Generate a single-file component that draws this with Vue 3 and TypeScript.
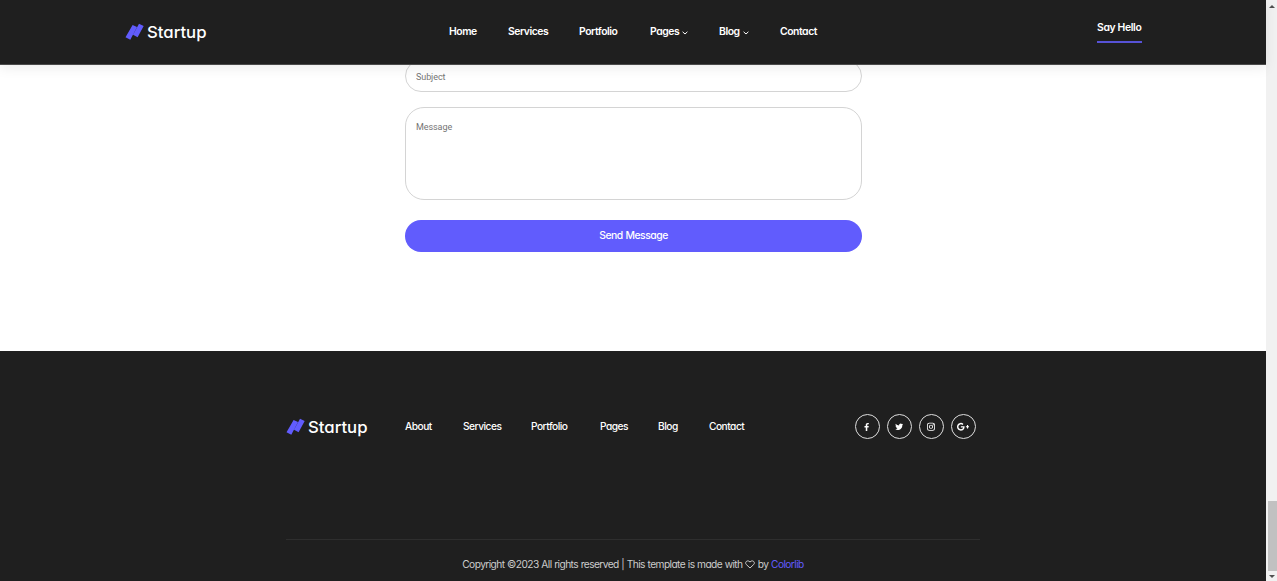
<script setup lang="ts">
interface NavItem {
  label: string
  width: number
  menu?: boolean
}

const mainNav: NavItem[] = [
  { label: 'Home', width: 59 },
  { label: 'Services', width: 71 },
  { label: 'Portfolio', width: 71 },
  { label: 'Pages', width: 69, menu: true },
  { label: 'Blog', width: 61, menu: true },
  { label: 'Contact', width: 37 },
]

const footerNav: NavItem[] = [
  { label: 'About', width: 58 },
  { label: 'Services', width: 68 },
  { label: 'Portfolio', width: 69 },
  { label: 'Pages', width: 58 },
  { label: 'Blog', width: 51 },
  { label: 'Contact', width: 35 },
]

const socials = [
  { name: 'Facebook', box: '0 0 1024 1792', w: 5.14, d: 'M959 140v264h-157q-86 0-116 36t-30 108v189h293l-39 296h-254v759h-306v-759h-255v-296h255v-218q0-186 104-288.500t277-102.500q147 0 228 12z' },
  { name: 'Twitter', box: '0 0 1664 1792', w: 8.36, d: 'M1620 408q-67 98-162 167 1 14 1 42 0 130-38 259.500t-115.500 248.500-184.500 210.500-258 146-323 54.500q-271 0-496-145 35 4 78 4 225 0 401-138-105-2-188-64.500t-114-159.500q33 5 61 5 43 0 85-11-112-23-185.500-111.500t-73.500-205.500v-4q68 38 146 41-66-44-105-115t-39-154q0-88 44-163 121 149 294.500 238.500t371.500 99.500q-8-38-8-74 0-134 94.500-228.500t228.500-94.500q140 0 236 102 109-21 205-78-37 115-142 178 93-10 186-50z' },
  { name: 'Instagram', box: '0 0 8 9', w: 8, d: 'M2.300.5h3.400A2.300 2.300 0 0 1 8 2.800v3.400A2.300 2.300 0 0 1 5.700 8.500H2.300A2.300 2.300 0 0 1 0 6.200V2.800A2.300 2.300 0 0 1 2.300.5zM2.400 1.300A1.600 1.600 0 0 0 .8 2.900v3.200a1.600 1.600 0 0 0 1.600 1.600h3.200a1.600 1.600 0 0 0 1.600-1.600V2.900a1.600 1.600 0 0 0-1.600-1.600zM4 2.400a2.100 2.100 0 1 1 0 4.200a2.100 2.100 0 0 1 0-4.200zM4 3.300a1.200 1.200 0 1 0 0 2.400a1.200 1.200 0 0 0 0-2.400zM5.800 2h.9v.9h-.9z' },
  { name: 'Google Plus', box: '0 0 2304 1792', w: 12.2, d: 'M1437 913q0 208-87 370.500t-248 254-369 91.500q-149 0-285-58t-234-156-156-234-58-285 58-285 156-234 234-156 285-58q286 0 491 192l-199 191q-117-113-292-113-123 0-227.500 62t-165.500 168.500-61 232.500 61 232.500 165.500 168.500 227.500 62q83 0 152.500-23t114.500-57.500 78.500-78.500 49-83 21.500-74h-416v-252h692q12 63 12 122zm867-122v210h-209v209h-210v-209h-209v-210h209v-209h210v209h209z' },
]
</script>

<template>
  <div class="page">
    <div class="view">
      <header class="header">
        <svg class="logo" viewBox="0 0 82 22" role="img" aria-label="Startup">
          <path class="mark" d="M.5 15.300 5.300 17.800 12 5 7.600 3zM8 12.800 12.600 15.200 18.700 4 14 1.800z" />
          <text x="22" y="15.500" textLength="59.500" lengthAdjust="spacingAndGlyphs">Startup</text>
        </svg>
        <nav class="main-nav">
          <a v-for="item in mainNav" :key="item.label" :style="{ width: item.width + 'px' }">
            {{ item.label }}<svg v-if="item.menu" class="chevron" viewBox="0 0 6 4"><path d="M.6.8 3 3 5.400.8" /></svg>
          </a>
        </nav>
        <a class="hello">Say Hello</a>
      </header>

      <main class="form">
        <input class="field subject" type="text" placeholder="Subject" />
        <textarea class="field message" placeholder="Message"></textarea>
        <button class="send" type="button">Send Message</button>
      </main>

      <footer class="footer">
        <div class="footer-top">
          <svg class="logo" viewBox="0 0 82 22" role="img" aria-label="Startup">
            <path class="mark" d="M.5 15.300 5.300 17.800 12 5 7.600 3zM8 12.800 12.600 15.200 18.700 4 14 1.800z" />
            <text x="22" y="15.500" textLength="59.500" lengthAdjust="spacingAndGlyphs">Startup</text>
          </svg>
          <nav class="footer-nav">
            <a v-for="item in footerNav" :key="item.label" :style="{ width: item.width + 'px' }">{{ item.label }}</a>
          </nav>
          <div class="socials">
            <a v-for="s in socials" :key="s.name" :aria-label="s.name">
              <svg :viewBox="s.box" :width="s.w" height="9.500"><path :d="s.d" fill-rule="evenodd" /></svg>
            </a>
          </div>
        </div>
        <p class="copyright">
          Copyright ©2023 All rights reserved | This template is made with
          <svg class="heart" viewBox="0 0 10 9"><path d="M5 8 1.300 4.500C-.8 2.200 2.600-.8 5 2 7.400-.8 10.800 2.200 8.700 4.500z" /></svg>
          by <a>Colorlib</a>
        </p>
      </footer>
    </div>
    <div class="scrollbar"><i class="up"></i><i class="thumb"></i><i class="down"></i></div>
  </div>
</template>

<style>
body {
  margin: 0;
  overflow: hidden;
}
</style>

<style scoped>
.page {
  display: flex;
  width: 1277px;
  height: 581px;
  overflow: hidden;
  background: #fff;
  font-family: Inter, 'Open Sans', sans-serif;
  font-feature-settings: 'cv11';
}
.view {
  display: flex;
  flex-direction: column;
  width: 1266px;
}
.header {
  display: flex;
  flex: none;
  box-sizing: border-box;
  height: 65px;
  padding: 22px 0 0 125px;
  border-bottom: 1px solid #4a4a4a;
  background: #1f1f1f;
  box-shadow: 0 3px 12px rgba(0, 0, 0, 0.08);
  position: relative;
  z-index: 1;
}
.logo {
  flex: none;
  width: 82px;
  height: 22px;
  overflow: visible;
}
.logo .mark {
  fill: #615cfd;
}
.logo text {
  fill: #fff;
  font-size: 16.5px;
  font-weight: 500;
}
.main-nav {
  display: flex;
  margin-left: 242px;
  color: #fff;
  font-size: 10.4px;
  font-weight: 600;
  line-height: 19px;
  letter-spacing: -0.45px;
  white-space: nowrap;
}
.chevron {
  width: 6px;
  height: 4px;
  margin-left: 3px;
  fill: none;
  stroke: #fff;
}
.hello {
  box-sizing: border-box;
  width: 45px;
  height: 24px;
  margin: -3px 0 0 280px;
  border-bottom: 2px solid #5752d6;
  color: #fff;
  font-size: 10.4px;
  font-weight: 600;
  line-height: 17px;
  letter-spacing: -0.36px;
  white-space: nowrap;
}
.form {
  display: flex;
  flex-direction: column;
  box-sizing: border-box;
  width: 457px;
  height: 286px;
  margin-left: 405px;
}
.field {
  box-sizing: border-box;
  width: 457px;
  margin: 0;
  border: 1px solid #d4d4d4;
  background: #fff;
  font: 9px Roboto, sans-serif;
  letter-spacing: -0.08px;
  resize: none;
}
.field::placeholder {
  color: #757575;
  opacity: 1;
}
.subject {
  height: 32px;
  margin-top: -5px;
  padding: 1px 10px 0;
  border-radius: 16px;
}
.message {
  height: 93px;
  margin-top: 15px;
  padding: 14px 10px;
  border-radius: 19px;
}
.send {
  height: 32px;
  margin-top: 20px;
  padding: 0 0 1px;
  border: 0;
  border-radius: 16px;
  background: #615cfd;
  color: #fff;
  font: 500 10.4px Inter, sans-serif;
  font-feature-settings: 'cv11';
  letter-spacing: -0.5px;
  word-spacing: 0.5px;
}
.footer {
  box-sizing: border-box;
  height: 230px;
  padding: 63px 286px 0;
  background: #1f1f1f;
  color: #fff;
}
.footer-top {
  display: flex;
  box-sizing: border-box;
  height: 126px;
  border-bottom: 1px solid #2e2e2e;
}
.footer-top .logo {
  margin-top: 3px;
}
.footer-nav {
  display: flex;
  margin: 1px 0 0 37px;
  font-size: 10.2px;
  font-weight: 450;
  line-height: 22px;
  letter-spacing: -0.5px;
}
.socials {
  display: flex;
  gap: 7px;
  margin-left: 110.5px;
}
.socials a {
  display: flex;
  align-items: center;
  justify-content: center;
  box-sizing: border-box;
  width: 25px;
  height: 25px;
  border: 1px solid #ddd;
  border-radius: 50%;
}
.socials svg {
  fill: #fff;
}
.copyright {
  margin: 16px 0 0;
  color: #ccc;
  font-size: 10.2px;
  line-height: 16px;
  text-align: center;
  letter-spacing: -0.57px;
  word-spacing: 0.3px;
  white-space: nowrap;
}
.copyright a {
  color: #615cfd;
}
.heart {
  width: 10px;
  height: 9px;
  vertical-align: -1px;
  fill: none;
  stroke: #ccc;
}
.scrollbar {
  display: flex;
  flex-direction: column;
  align-items: center;
  width: 11px;
  background: #f1f1f1;
}
.up,
.down {
  border: 3px solid transparent;
}
.up {
  margin-top: 2px;
  border-bottom-color: #505050;
}
.thumb {
  width: 9px;
  height: 72px;
  margin: 493px 0 4px 1px;
  background: #c1c1c1;
}
.down {
  border-top-color: #505050;
}
</style>
